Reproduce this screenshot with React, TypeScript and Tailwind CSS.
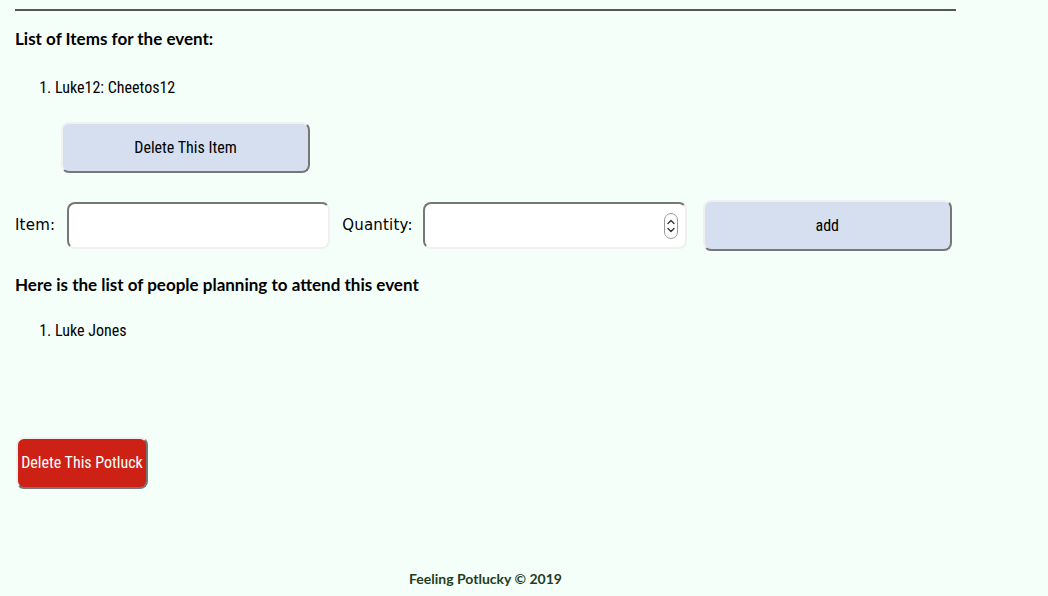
import { useState } from 'react'

const headFont = "font-['Liberation_Sans_Narrow','Roboto_Condensed',Roboto,sans-serif]"

function Spinner() {
  return (
    <svg width="14" height="26" viewBox="0 0 14 26" className="pointer-events-none absolute right-[9px] top-1/2 -translate-y-1/2">
      <rect x="0.5" y="0.5" width="13" height="25" rx="6.5" fill="#fff" stroke="#999" />
      <path d="M4 10.5 L7 7.5 L10 10.5" fill="none" stroke="#333" strokeWidth="1.4" strokeLinecap="round" strokeLinejoin="round" />
      <path d="M4 15.5 L7 18.5 L10 15.5" fill="none" stroke="#333" strokeWidth="1.4" strokeLinecap="round" strokeLinejoin="round" />
    </svg>
  )
}

export default function App() {
  const [items, setItems] = useState([{ user: 'Luke12', name: 'Cheetos12' }])
  const [item, setItem] = useState('')
  const [qty, setQty] = useState('')

  const raised =
    'rounded-lg border-2 border-t-[#f0f0f0] border-l-[#f0f0f0] border-b-[#777] border-r-[#777]'
  const sunken =
    'rounded-lg border-2 border-t-[#777] border-l-[#777] border-b-[#f0f0f0] border-r-[#f0f0f0] bg-white outline-none'

  return (
    <div className="min-h-[596px] bg-[#f5fffa] text-black">
      <div className="ml-[15px] w-[941px] pt-[9px]">
        <hr className="border-0 border-t-2 border-t-[#555]" />

        <h2 className="mt-[17px] text-[17px] font-bold font-['Lato',sans-serif] leading-[22px]">
          List of Items for the event:
        </h2>

        <ol className={`mt-[28px] list-decimal pl-[40px] text-[16px] leading-[20px] ${headFont}`}>
          {items.map((it, i) => (
            <li key={i}>
              {it.user}: {it.name}
              <div className="mt-[24px] mb-[27px]">
                <button
                  onClick={() => setItems(items.filter((_, j) => j !== i))}
                  className={`ml-[6px] h-[51px] w-[249px] bg-[#d5dff0] text-[16px] ${raised}`}
                >
                  Delete This Item
                </button>
              </div>
            </li>
          ))}
        </ol>

        <form
          className="flex items-center"
          onSubmit={(e) => {
            e.preventDefault()
            if (!item) return
            setItems([...items, { user: 'Luke12', name: item }])
            setItem('')
            setQty('')
          }}
        >
          <label className="text-[15px] font-['DejaVu_Sans',sans-serif] tracking-[0.2px]">Item:</label>
          <input
            value={item}
            onChange={(e) => setItem(e.target.value)}
            className={`ml-[12px] h-[47px] w-[263px] px-2 ${sunken}`}
          />
          <label className="ml-[12px] text-[15px] font-['DejaVu_Sans',sans-serif] tracking-[0.2px]">Quantity:</label>
          <div className="relative ml-[10px]">
            <input
              type="number"
              value={qty}
              onChange={(e) => setQty(e.target.value)}
              className={`h-[47px] w-[264px] px-2 [appearance:textfield] [&::-webkit-inner-spin-button]:appearance-none ${sunken}`}
            />
            <Spinner />
          </div>
          <button
            type="submit"
            className={`ml-[16px] h-[51px] w-[249px] bg-[#d5dff0] text-[16px] ${headFont} ${raised}`}
          >
            add
          </button>
        </form>

        <h2 className="mt-[23px] text-[17px] font-bold font-['Lato',sans-serif] leading-[22px]">
          Here is the list of people planning to attend this event
        </h2>

        <ol className={`mt-[25px] list-decimal pl-[40px] text-[16px] leading-[20px] ${headFont}`}>
          <li>Luke Jones</li>
        </ol>

        <button
          className={`mt-[96px] ml-px h-[52px] w-[132px] bg-[#cd2115] text-[16px] text-white ${headFont} ${raised}`}
        >
          Delete This Potluck
        </button>

        <footer className="mt-[79px] text-center text-[14px] font-bold text-[#1f3d1f] font-['Lato',sans-serif]">
          Feeling Potlucky © 2019
        </footer>
      </div>
    </div>
  )
}
